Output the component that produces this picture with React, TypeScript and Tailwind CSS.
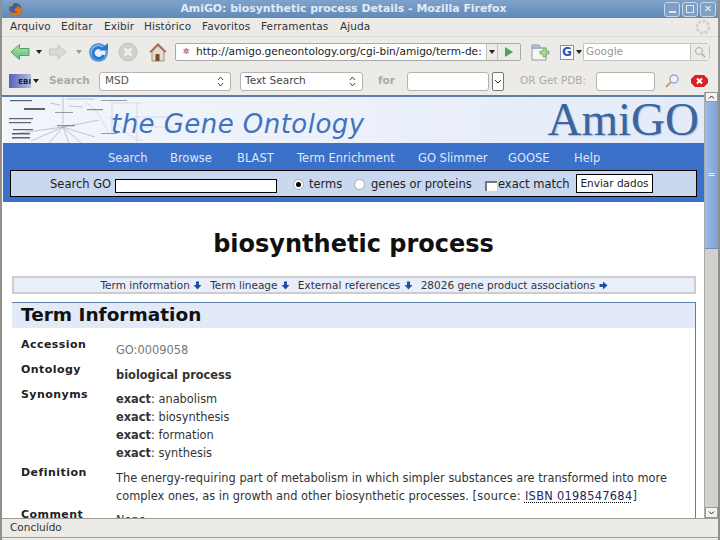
import React from "react";

const Down = () => (
  <svg width="9" height="9" viewBox="0 0 9 9" className="inline-block align-[-1px]">
    <path d="M3 0.5h3v3.500h2.500L4.500 8.500 0.500 4H3z" fill="#1f4fa8" />
  </svg>
);

const Tiny = () => (
  <svg width="6" height="4" viewBox="0 0 6 4"><path d="M0 0h6L3 4z" fill="#222" /></svg>
);

const Firefox = () => (
  <svg width="15" height="15" viewBox="0 0 15 15">
    <circle cx="7.500" cy="7.500" r="6.500" fill="#3a5f9e" />
    <path d="M1.500 9C2 12.500 4.500 14 7.500 14c3.500 0 6.500-3 6.500-6.500 0-2-1-4-2.500-5 1 1.500 1 3 .5 4-.5-1.500-1.500-2.500-3-3 .5 1 0 2-1 2.500-1 .5-2 1-1.500 2.500.5 1 2 1 3 .5-.5 1.500-2 2-3.500 1.500C3.500 11 2.500 10 2.500 8.500 2 8.500 1.800 8.800 1.500 9z" fill="#d9741f" />
    <path d="M1.800 5C2.500 3 4 1.500 6 1.200 5 2 4.500 3 4.500 4 3.500 4 2.500 4.300 1.800 5z" fill="#e89a2c" />
  </svg>
);

const WinBtn = ({ children }: { children: React.ReactNode }) => (
  <div className="w-[16px] h-[15px] rounded-[3px] border border-[#c9d8ea] bg-[#7f9fc4] flex items-center justify-center">
    {children}
  </div>
);

const Back = () => (
  <svg width="20" height="18" viewBox="0 0 20 18">
    <defs>
      <linearGradient id="bk" x1="0" y1="0" x2="0" y2="1">
        <stop offset="0" stopColor="#b5e3a8" />
        <stop offset="1" stopColor="#5fbd78" />
      </linearGradient>
    </defs>
    <path d="M9.500 1.500L1 9l8.500 7.500V12.500H19v-7H9.500z" fill="url(#bk)" stroke="#4aa36a" strokeWidth="1" />
  </svg>
);
const Fwd = () => (
  <svg width="20" height="16" viewBox="0 0 20 16">
    <path d="M10 1l8 7-8 7v-4H1.500V5H10z" fill="#d9d9d5" stroke="#c4c4bf" strokeWidth="1" />
  </svg>
);
const Reload = () => (
  <svg width="21" height="21" viewBox="0 0 21 21">
    <circle cx="10.500" cy="10.500" r="9.500" fill="#5a9ade" />
    <circle cx="10.500" cy="10.500" r="7" fill="#e4f0fb" />
    <path d="M14.500 7a5.500 5.500 0 1 0 1.200 6" fill="none" stroke="#2d78cc" strokeWidth="3" />
    <path d="M11 8.500h9V1z" fill="#2d78cc" />
  </svg>
);
const Stop = () => (
  <svg width="20" height="20" viewBox="0 0 20 20">
    <circle cx="10" cy="10" r="9" fill="#d0d0cc" stroke="#c4c4bf" />
    <path d="M6.500 6.500l7 7M13.500 6.500l-7 7" stroke="#f2f2f0" strokeWidth="2.500" />
  </svg>
);
const Home = () => (
  <svg width="20" height="20" viewBox="0 0 20 20">
    <path d="M10 2L2 10h2v9h12v-9h2z" fill="#e2dccb" stroke="#a09078" strokeWidth="1" />
    <path d="M10 1L1 10h3l6-6 6 6h3z" fill="#a56a50" />
    <rect x="7.500" y="12" width="4" height="7" fill="#7a4a2a" />
  </svg>
);
const Bookmark = () => (
  <svg width="24" height="20" viewBox="0 0 24 20">
    <path d="M2 6h14v12H2z" fill="#f6f6f4" stroke="#8a9ab0" />
    <path d="M2 3h7l2 3H2z" fill="#b8c8dc" stroke="#8a9ab0" />
    <path d="M13 6h3v3h3v3h-3v3h-3v-3h-3V9h3z" fill="#a5dc90" stroke="#63a853" strokeWidth=".7" />
  </svg>
);
const Spinner = () => (
  <svg width="18" height="18" viewBox="0 0 18 18">
    <circle cx="9" cy="9" r="6" fill="none" stroke="#d2d2ce" strokeWidth="3" strokeDasharray="3 1.500" />
  </svg>
);
const Updown = () => (
  <svg width="7" height="11" viewBox="0 0 7 11">
    <path d="M1 4l2.500-3L6 4M1 7l2.500 3L6 7" fill="none" stroke="#444" strokeWidth="1" />
  </svg>
);

const Diagram = () => (
  <svg width="200" height="46" viewBox="0 0 200 46" className="shrink-0">
    <g stroke="#9aa2b0" strokeWidth=".6" fill="none">
      <path d="M60 0v27M60 30L10 37M60 30L28 44M60 30L46 46M60 30l6 16M60 30l18 16M60 30l32 10M60 30l36-7" />
      <path d="M64 2h28M47 6l10 2M66 9l14 1" />
    </g>
    <g stroke="#c6cdd9" strokeWidth=".6" fill="none">
      <path d="M82 5c14 8 18 20 24 32M109 4v34M134 6v40M110 6h30M106 20c10 4 12 18 34 24M130 20h36M140 30h30" />
    </g>
    <g fill="#5a626e">
      <rect x="7" y="3" width="22" height="1.200" />
      <rect x="21" y="11" width="21" height="2" />
      <rect x="6" y="21" width="24" height="1.200" />
      <rect x="6" y="25" width="22" height="1.200" />
      <rect x="10" y="32" width="20" height="1.200" />
      <rect x="9" y="36" width="18" height="1.500" />
      <rect x="9" y="40" width="18" height="1.500" />
      <rect x="54" y="28" width="18" height="1.200" opacity=".7" />
      <rect x="84" y="12" width="16" height="1.200" opacity=".7" />
      <rect x="52" y="15" width="18" height="1" opacity=".6" />
      <rect x="98" y="3" width="26" height="1" opacity=".6" />
      <rect x="98" y="36" width="16" height="1" opacity=".6" />
    </g>
  </svg>
);

const Exact = ({ t }: { t: string }) => (
  <div className="h-[18px] leading-[18px]"><b className="font-bold">exact</b>: {t}</div>
);

const Label = ({ children }: { children: string }) => (
  <div className="w-[104px] shrink-0 pl-[9px] pt-[1px] font-bold text-[11px] leading-[14px] text-[#222] tracking-[0.45px]">{children}</div>
);

export default function App() {
  return (
    <div className="w-[720px] h-[540px] overflow-hidden flex flex-col bg-[#ecebe8] text-[#222] font-['DejaVu_Sans',sans-serif] border-x-2 border-[#8f8f8c]">
      {/* title */}
      <div className="h-[18px] -mx-[2px] shrink-0 bg-gradient-to-b from-[#7fa2cb] to-[#5f8ab9] flex items-center pl-[8px] pr-[4px]">
        <Firefox />
        <div className="flex-1 pt-[1px] text-center text-white/80 font-bold text-[10.900px] whitespace-nowrap">
          AmiGO: biosynthetic process Details - Mozilla Firefox
        </div>
        <div className="flex gap-[2px]">
          <WinBtn><div className="w-[7px] h-[2px] bg-[#dfe8f3] mt-[6px]" /></WinBtn>
          <WinBtn><div className="w-[8px] h-[8px] border border-[#dfe8f3]" /></WinBtn>
          <WinBtn><span className="text-[#eef] text-[10px] leading-none font-bold">✕</span></WinBtn>
        </div>
      </div>
      {/* menu */}
      <div className="h-[19px] shrink-0 flex items-center pl-[8px] pr-[6px] text-[10.500px] text-[#333] border-b border-[#dcdbd8] tracking-[0.1px]">
        <span className="w-[51px]">Arquivo</span>
        <span className="w-[43px]">Editar</span>
        <span className="w-[40px]">Exibir</span>
        <span className="w-[58px]">Histórico</span>
        <span className="w-[59px]">Favoritos</span>
        <span className="w-[79px]">Ferramentas</span>
        <span className="flex-1">Ajuda</span>
        <Spinner />
      </div>
      {/* nav */}
      <div className="h-[30px] shrink-0 flex items-center pl-[8px]">
        <Back />
        <div className="w-[6px] ml-[6px] mr-[6px]"><Tiny /></div>
        <Fwd />
        <div className="w-[6px] ml-[8px] mr-[6px] opacity-40"><Tiny /></div>
        <Reload />
        <div className="w-[9px]" />
        <Stop />
        <div className="w-[10px]" />
        <Home />
        <div className="w-[7px]" />
        <div className="w-[346px] h-[18px] bg-white border border-[#aaa9a5] rounded-[2px] flex items-center overflow-hidden">
          <div className="w-[20px] flex justify-center text-[8px] leading-none text-[#a33] shrink-0">✲</div>
          <div className="flex-1 text-[10.600px] text-[#222] whitespace-nowrap">http://amigo.geneontology.org/cgi-bin/amigo/term-de:</div>
          <div className="w-[12px] h-full border-x border-[#c4c3bf] bg-[#ecebe8] flex items-center justify-center shrink-0"><Tiny /></div>
          <div className="w-[22px] h-full bg-[#ecebe8] flex items-center justify-center shrink-0">
            <svg width="10" height="10" viewBox="0 0 10 10"><path d="M1 0l8 5-8 5z" fill="#4ea25a" /></svg>
          </div>
        </div>
        <div className="w-[9px]" />
        <Bookmark />
        <div className="w-[6px]" />
        <div className="w-[14px] h-[15px] bg-white border border-[#7a93c0] flex items-center justify-center text-[12px] font-bold text-[#2d57b5] leading-none">G</div>
        <div className="ml-[2px] w-[7px]"><Tiny /></div>
        <div className="w-[127px] h-[18px] bg-white border border-[#c4c3bf] rounded-r-[4px] flex items-center pl-[2px] text-[10.500px] text-[#999] justify-between">
          <span>Google</span>
          <div className="w-[19px] h-full border-l border-[#c4c3bf] bg-[#ecebe8] flex items-center justify-center">
            <svg width="12" height="12" viewBox="0 0 12 12"><circle cx="5" cy="5" r="3.500" fill="#eee" stroke="#aaa" /><path d="M8 8l3 3" stroke="#aaa" strokeWidth="1.500" /></svg>
          </div>
        </div>
      </div>
      {/* ebi */}
      <div className="h-[28px] shrink-0 flex items-center pl-[7px] text-[10.500px] whitespace-nowrap">
        <div className="w-[22px] h-[14px] bg-gradient-to-r from-[#5563b5] to-[#b8bdd6] text-[7px] text-right font-bold text-[#123] leading-[17px] overflow-hidden">EBI</div>
        <div className="ml-[2px] w-[6px]"><Tiny /></div>
        <span className="ml-[10px] w-[50px] font-bold text-[#aaa]">Search</span>
        <div className="w-[132px] h-[19px] bg-white border border-[#b5b4b0] rounded-[3px] flex items-center justify-between pl-[5px] pr-[6px] text-[#555]">
          <span>MSD</span><Updown />
        </div>
        <div className="ml-[9px] w-[123px] h-[19px] bg-white border border-[#b5b4b0] rounded-[3px] flex items-center justify-between pl-[4px] pr-[6px] text-[#444]">
          <span>Text Search</span><Updown />
        </div>
        <span className="ml-[15px] w-[29px] font-bold text-[#aaa]">for</span>
        <div className="w-[82px] h-[19px] bg-white border border-[#b5b4b0] rounded-[3px]" />
        <div className="ml-[3px] w-[12px] h-[19px] bg-white border border-[#777] rounded-[2px] flex items-center justify-center">
          <svg width="8" height="5" viewBox="0 0 8 5"><path d="M1 1l3 3 3-3" fill="none" stroke="#333" /></svg>
        </div>
        <span className="ml-[16px] w-[76px] text-[#aaa]">OR Get PDB:</span>
        <div className="w-[59px] h-[19px] bg-white border border-[#b5b4b0] rounded-[3px]" />
        <div className="ml-[9px]">
          <svg width="16" height="16" viewBox="0 0 16 16"><circle cx="10" cy="6" r="4" fill="#eef4fa" stroke="#8fa9c4" strokeWidth="1.400" /><path d="M7 9l-5 5" stroke="#d2a066" strokeWidth="2.200" /></svg>
        </div>
        <div className="ml-[10px]">
          <svg width="19" height="14" viewBox="0 0 19 14"><path d="M5 1h9l4 4v4l-4 4H5L1 9V5z" fill="#d82222" /><path d="M7 4.500l5 5M12 4.500l-5 5" stroke="#fff" strokeWidth="2" /></svg>
        </div>
      </div>
      {/* content */}
      <div className="h-[423px] shrink-0 flex">
        <div className="w-[702px] shrink-0 bg-white overflow-hidden pl-[1px] border-t-2 border-[#5b7ea8]">
          <div className="h-[46px] flex bg-gradient-to-r from-[#f2f5fb] to-[#e4ebf8]">
            <Diagram />
            <div className="relative -ml-[92px] mt-[4px] h-[42px] italic text-[26px] leading-[46px] text-[#3f72c2] tracking-[0.45px] whitespace-nowrap">the Gene Ontology</div>
            <div className="flex-1 text-right pr-[5px] font-['Liberation_Serif',serif] text-[47px] leading-[44px] text-[#3a659f] [text-shadow:1px_1px_1px_#a9bcd8]">AmiGO</div>
          </div>
          <div className="h-[59px] bg-[#3b71c9] pt-[1px]">
            <div className="h-[26px] pt-[3px] flex items-center text-[11.500px] text-[#dfe8f6] pl-[105px]">
              <span className="w-[62px]">Search</span>
              <span className="w-[67px]">Browse</span>
              <span className="w-[60px]">BLAST</span>
              <span className="w-[121px]">Term Enrichment</span>
              <span className="w-[90px]">GO Slimmer</span>
              <span className="w-[66px]">GOOSE</span>
              <span>Help</span>
            </div>
            <div className="mx-[7px] h-[27px] bg-[#c9d8ef] border border-black flex items-center pl-[39px] text-[11.500px] text-[#222] whitespace-nowrap">
              <span className="w-[65px] mt-[3px]">Search GO</span>
              <div className="w-[162px] h-[14px] mt-[4px] bg-white border border-black" />
              <div className="ml-[16px] mt-[2px] w-[11px] h-[11px] rounded-full bg-white border border-[#aaa] flex items-center justify-center"><div className="w-[5px] h-[5px] rounded-full bg-black" /></div>
              <span className="ml-[5px] w-[45px] mt-[3px]">terms</span>
              <div className="w-[11px] h-[11px] mt-[2px] rounded-full bg-white border border-[#aaa]" />
              <span className="ml-[6px] w-[114px] mt-[3px]">genes or proteins</span>
              <div className="w-[12px] h-[10px] mt-[5px] bg-white border-t-2 border-l-2 border-[#777]" />
              <span className="ml-[1px] w-[78px] mt-[3px]">exact match</span>
              <div className="h-[19px] w-[77px] bg-white border border-black text-[10.500px] flex items-center justify-center">Enviar dados</div>
            </div>
          </div>
          <div className="h-[74px] flex items-center justify-center font-bold text-[24px] text-[#111] pt-[10px]">biosynthetic process</div>
          <div className="ml-[9px] mr-[8px] h-[18px] border-2 border-[#cdcdcd] bg-[#e8effa] flex items-center justify-center gap-[8px] text-[10.500px] text-[#334] whitespace-nowrap pt-[1px]">
            <span>Term information <Down /></span>
            <span>Term lineage <Down /></span>
            <span>External references <Down /></span>
            <span>28026 gene product associations <svg width="9" height="9" viewBox="0 0 9 9" className="inline-block align-[-1px]"><path d="M0.500 3h3.500V0.500L8.500 4.500 4 8.500V6H0.500z" fill="#1f4fa8" /></svg></span>
          </div>
          <div className="ml-[9px] mr-[8px] mt-[8px] h-[300px] border-t border-r border-[#5b7ea8]">
            <div className="h-[25px] bg-[#e2eaf8] pl-[9px] font-bold text-[18.500px] leading-[24px] text-[#111]">Term Information</div>
            <div className="pt-[9px] text-[11.400px] text-[#333]">
              <div className="flex h-[25px]">
                <Label>Accession</Label>
                <div className="pt-[5px] text-[#777]">GO:0009058</div>
              </div>
              <div className="flex h-[25px]">
                <Label>Ontology</Label>
                <div className="pt-[5px] font-bold">biological process</div>
              </div>
              <div className="flex h-[78px]">
                <Label>Synonyms</Label>
                <div className="pt-[3px]">
                  <Exact t="anabolism" />
                  <Exact t="biosynthesis" />
                  <Exact t="formation" />
                  <Exact t="synthesis" />
                </div>
              </div>
              <div className="flex h-[42px]">
                <Label>Definition</Label>
                <div className="pt-[4px] leading-[18px] w-[560px]">
                  The energy-requiring part of metabolism in which simpler substances are transformed into more complex ones, as in growth and other biosynthetic processes. <span className="tracking-[0.3px]">[source: <span className="text-[#25255f] underline decoration-dotted decoration-black underline-offset-2">ISBN 0198547684</span>]</span>
                </div>
              </div>
              <div className="flex h-[25px]">
                <Label>Comment</Label>
                <div className="pt-[5px]">None</div>
              </div>
            </div>
          </div>
        </div>
        <div className="relative w-[14px] -mt-[3px] h-[426px] shrink-0 bg-[#d2d1cd] border-l border-[#aaa] flex flex-col">
          <div className="h-[10px] shrink-0 bg-[#f4f3f1] border border-[#999] flex items-center justify-center">
            <svg width="7" height="4" viewBox="0 0 7 4"><path d="M1 3.500L3.500 1 6 3.500" fill="none" stroke="#222" /></svg>
          </div>
          <div className="h-[147px] shrink-0 bg-gradient-to-r from-[#9dbce6] to-[#7ea3d6] border-b border-[#6f8fb8] flex items-center justify-center text-[10px] leading-none text-[#eaf0f8]">=</div>
          <div className="flex-1" />
          <div className="h-[11px] shrink-0 bg-[#f4f3f1] border border-[#999] flex items-center justify-center">
            <svg width="7" height="4" viewBox="0 0 7 4"><path d="M1 .5L3.500 3 6 .5" fill="none" stroke="#222" /></svg>
          </div>
        </div>
      </div>
      {/* status */}
      <div className="h-[20px] shrink-0 border-y border-[#9a9a97] flex items-center pl-[8px] text-[10.500px] text-[#333] bg-[#ecebe8]">Concluído</div>
    </div>
  );
}
